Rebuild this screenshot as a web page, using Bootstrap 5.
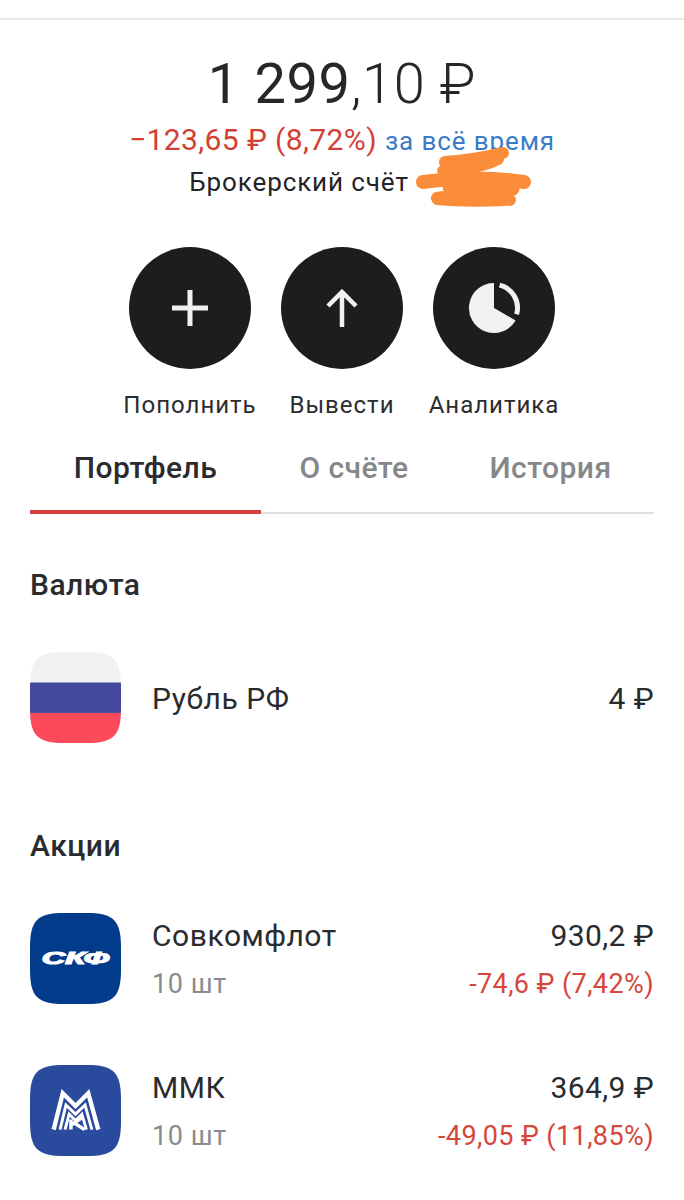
<!DOCTYPE html>
<html lang="ru">
<head>
<meta charset="utf-8">
<title>Брокерский счёт</title>
<link href="https://cdn.jsdelivr.net/npm/bootstrap@5.3.0/dist/css/bootstrap.min.css" rel="stylesheet">
<style>
html,body{background:#fff;}
body{font-family:Roboto,"Liberation Sans",sans-serif;color:#222326;overflow:hidden;height:1200px;}
.app-shell{padding-top:18px;}
.top-rule{height:2px;background:#e9e9e9;}
.summary{position:relative;text-align:center;}
.total{font-size:56px;line-height:66px;padding-top:31px;letter-spacing:.6px;color:#25272a;}
.total span{font-weight:300;}
.delta{font-size:30px;line-height:34px;margin-top:6px;color:#d23f33;white-space:nowrap;letter-spacing:.4px;}
.delta a{font-size:26px;color:#3a7bc8;text-decoration:none;letter-spacing:.9px;}
.acct{font-size:26px;line-height:32px;margin-top:8px;letter-spacing:.9px;padding-right:86px;}
.scribble{position:absolute;left:413px;top:125px;}
.actions{margin-top:49px;gap:30px;}
.act{width:122px;}
.act-circle{width:122px;height:122px;border-radius:50%;background:#1d1d1f;}
.act-label{font-size:24px;line-height:30px;margin-top:21px;letter-spacing:1px;white-space:nowrap;color:#2b2c2f;}
.tabs-row{margin:20px 30px 0;border-bottom:2px solid #e0e0e0;height:74px;}
.tab-item{font-size:30px;font-weight:500;color:#85878a;line-height:34px;padding-top:11px;text-align:center;letter-spacing:.45px;}
.tab-item.on{color:#2a2b2e;position:relative;}
.tab-item.on::after{content:"";position:absolute;left:0;right:0;bottom:-2px;height:4px;background:#d5413a;}
.tab-one{width:231px;}
.tab-two{width:186px;}
.tab-three{flex:1;}
.sect-title{font-size:30px;font-weight:500;line-height:34px;margin:0 30px;letter-spacing:.5px;color:#2a2b2e;}
.pos-row{margin:0 30px;gap:31px;}
.pos-icon{width:91px;height:91px;flex:none;display:block;}
.pos-text{padding-top:2px;}
.pos-name{font-size:30px;line-height:34px;letter-spacing:.55px;color:#2a2b2e;}
.pos-sub{font-size:27px;line-height:32px;margin-top:15px;color:#8a8c8f;letter-spacing:.6px;}
.pos-val{text-align:right;font-size:30px;line-height:34px;letter-spacing:.4px;color:#2a2b2e;}
.pos-chg{text-align:right;font-size:27px;line-height:32px;margin-top:15px;color:#d5473b;letter-spacing:.4px;}
.logo-txt{font-family:"Liberation Sans",sans-serif;font-weight:700;font-style:italic;}
.sect-one{margin-top:54px;}
.row-flag{margin-top:50px;}
.sect-two{margin-top:86px;}
.row-skf{margin-top:50px;}
.row-mmk{margin-top:61px;}
</style>
</head>
<body>
<div class="app-shell">
  <div class="top-rule"></div>
  <section class="summary">
    <div class="total">1 299<span>,10 ₽</span></div>
    <div class="delta">−123,65 ₽ (8,72%) <a href="#">за всё время</a></div>
    <div class="acct">Брокерский счёт</div>
    <svg class="scribble" width="122" height="66" viewBox="0 0 122 66" aria-hidden="true">
      <g fill="none" stroke="#fb8d3a" stroke-linecap="round" stroke-linejoin="round">
        <path stroke-width="12" d="M32 17 C50 16 72 12 90 8"/>
        <path stroke-width="12" d="M30 26 C50 24 70 22 85 14"/>
        <path stroke-width="14" d="M10 37 C40 33 80 32 111 37"/>
        <path stroke-width="13" d="M36 42 C60 40 85 42 100 44"/>
        <path stroke-width="12" d="M24 53 C50 48 75 50 97 55"/>
        <path stroke-width="10" d="M24 55 C45 57 70 57 92 56"/>
      </g>
    </svg>
    <div class="actions d-flex justify-content-center">
      <div class="act d-flex flex-column align-items-center">
        <div class="act-circle d-flex align-items-center justify-content-center">
          <svg width="36" height="36" viewBox="0 0 36 36" aria-hidden="true"><path d="M18 0v36M0 18h36" stroke="#f1f1f1" stroke-width="5" fill="none"/></svg>
        </div>
        <div class="act-label">Пополнить</div>
      </div>
      <div class="act d-flex flex-column align-items-center">
        <div class="act-circle d-flex align-items-center justify-content-center">
          <svg width="32" height="38" viewBox="0 0 32 38" aria-hidden="true"><path d="M16 38V3M2 17L16 3l14 14" stroke="#f1f1f1" stroke-width="4.5" fill="none"/></svg>
        </div>
        <div class="act-label">Вывести</div>
      </div>
      <div class="act d-flex flex-column align-items-center">
        <div class="act-circle d-flex align-items-center justify-content-center">
          <svg width="54" height="54" viewBox="0 0 54 54" aria-hidden="true">
            <path d="M27 2 V27 L48.600 39.500 A25 25 0 1 1 27 2Z" fill="#f1f1f1"/>
            <path d="M32.600 4.100 A23.500 23.500 0 0 1 49.600 33.300" fill="none" stroke="#f1f1f1" stroke-width="5"/>
          </svg>
        </div>
        <div class="act-label">Аналитика</div>
      </div>
    </div>
  </section>
  <div class="tabs-row d-flex">
    <div class="tab-item tab-one on">Портфель</div>
    <div class="tab-item tab-two">О счёте</div>
    <div class="tab-item tab-three">История</div>
  </div>
  <h2 class="sect-title sect-one">Валюта</h2>
  <div class="pos-row row-flag d-flex align-items-center">
    <svg class="pos-icon" viewBox="0 0 100 100" aria-hidden="true">
      <defs><clipPath id="sq"><path d="M38 0H62C92 0 100 8 100 38V62C100 92 92 100 62 100H38C8 100 0 92 0 62V38C0 8 8 0 38 0Z"/></clipPath></defs>
      <g clip-path="url(#sq)">
        <rect width="100" height="33.500" fill="#f1f1f1"/>
        <rect y="33.500" width="100" height="33.500" fill="#45499d"/>
        <rect y="67" width="100" height="33" fill="#fb4a59"/>
      </g>
    </svg>
    <div class="pos-name pos-text flex-grow-1">Рубль РФ</div>
    <div class="pos-val pos-text">4 ₽</div>
  </div>
  <h2 class="sect-title sect-two">Акции</h2>
  <div class="pos-row row-skf d-flex align-items-center">
    <svg class="pos-icon" viewBox="0 0 100 100" aria-hidden="true">
      <path d="M38 0H62C92 0 100 8 100 38V62C100 92 92 100 62 100H38C8 100 0 92 0 62V38C0 8 8 0 38 0Z" fill="#023a8c"/>
      <text class="logo-txt" x="50" y="56" text-anchor="middle" font-size="19" textLength="74" lengthAdjust="spacingAndGlyphs" fill="#fff" stroke="#fff" stroke-width="1.300">СКФ</text>
    </svg>
    <div class="pos-text flex-grow-1">
      <div class="pos-name">Совкомфлот</div>
      <div class="pos-sub">10 шт</div>
    </div>
    <div class="pos-text">
      <div class="pos-val">930,2 ₽</div>
      <div class="pos-chg">-74,6 ₽ (7,42%)</div>
    </div>
  </div>
  <div class="pos-row row-mmk d-flex align-items-center">
    <svg class="pos-icon" viewBox="0 0 100 100" aria-hidden="true">
      <path d="M38 0H62C92 0 100 8 100 38V62C100 92 92 100 62 100H38C8 100 0 92 0 62V38C0 8 8 0 38 0Z" fill="#2a4a9d"/>
      <g fill="none" stroke="#fff" stroke-width="3.200" stroke-linejoin="miter">
        <path d="M26 71 L36 31 L50 45 L64 31 L75 71" stroke-width="4.800"/>
        <path d="M33 71 L39.500 44 L50 54 L60.500 44 L68 71"/>
        <path d="M38.500 71 L43 54 L50 61 L57 54 L62 71"/>
        <path d="M45 71 V60 M45 66 L57 58 M49 64 L60 71" stroke-width="3.800"/>
      </g>
    </svg>
    <div class="pos-text flex-grow-1">
      <div class="pos-name">ММК</div>
      <div class="pos-sub">10 шт</div>
    </div>
    <div class="pos-text">
      <div class="pos-val">364,9 ₽</div>
      <div class="pos-chg">-49,05 ₽ (11,85%)</div>
    </div>
  </div>
</div>
</body>
</html>
